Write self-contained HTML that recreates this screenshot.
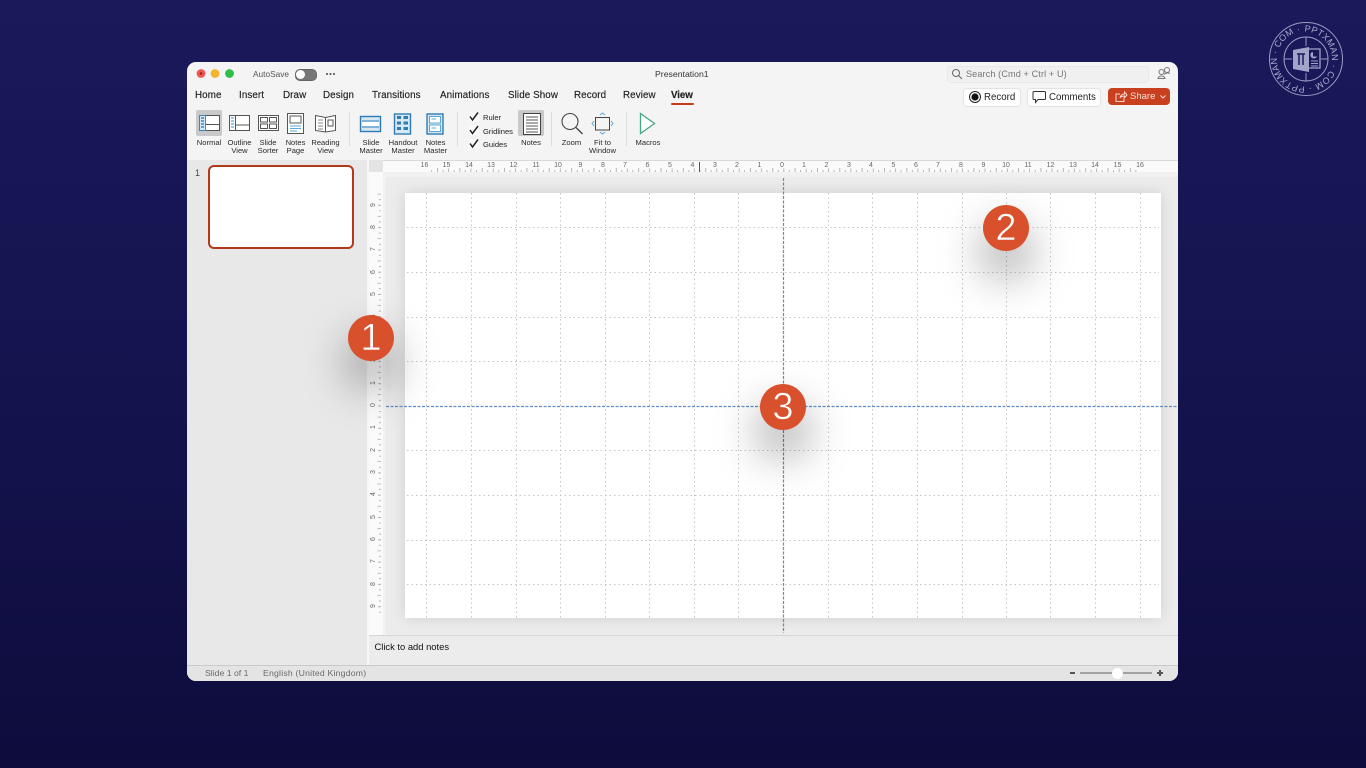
<!DOCTYPE html>
<html><head><meta charset="utf-8"><style>
html,body{margin:0;padding:0;width:1366px;height:768px;overflow:hidden}
body{background:linear-gradient(180deg,#1a195a 0%,#151450 45%,#0e0c3c 100%);font-family:"Liberation Sans",sans-serif;position:relative}
#w{position:absolute;left:187px;top:62px;width:991px;height:619px;border-radius:9px;overflow:hidden;background:#f4f4f4;filter:blur(.3px)}
.a{position:absolute}
.t{position:absolute;white-space:nowrap;color:#222}
.tab{top:28px;font-size:9.8px;line-height:12px;color:#222;letter-spacing:.1px;-webkit-text-stroke:.15px #222}
.l{position:absolute;font-size:7.6px;line-height:8.8px;text-align:center;color:#2a2a2a;white-space:nowrap;transform:translateX(-50%)}
.b{position:absolute;width:46px;height:46px;border-radius:50%;background:#d9512c;color:#fff;font-size:38px;line-height:46px;text-align:center;box-shadow:0 24px 44px 2px rgba(0,0,0,.36);font-family:"Liberation Sans",sans-serif;-webkit-text-stroke:.6px #d9512c}
.btn{position:absolute;top:26px;height:17px;background:#fff;border:1px solid #e3e3e3;border-radius:4px;box-sizing:content-box;font-size:9.2px;line-height:17px;color:#222}
</style></head><body>

<svg class="a" style="left:1266px;top:19px" width="80" height="80" viewBox="0 0 80 80">
<defs><path id="cp" d="M38.500 12.500a27.500 27.500 0 1 1 -.01 0"/></defs>
<g fill="none" stroke="#9a9bc4" stroke-width="1">
<circle cx="40" cy="40" r="36.500"/><circle cx="40" cy="40" r="22"/>
<path d="M40 18V27M40 54V62M18 40H26M55 40H62"/>
</g>
<path d="M27 31L43 28V53L27 50Z" fill="#a3a4c9"/>
<path d="M31 35H39M33 35V46M37 35V46" stroke="#1a195c" stroke-width="1.500" fill="none"/>
<path d="M43 30H54V49H43" fill="none" stroke="#a3a4c9" stroke-width="1.300"/>
<path d="M46 33a3.500 3.500 0 1 0 5 4.500h-4v-4z" fill="#a3a4c9"/>
<path d="M45 42H52M45 44.500H52M45 47H52" stroke="#a3a4c9" stroke-width=".9"/>
<text font-family="Liberation Sans" font-size="9" fill="#a9aacd" letter-spacing=".2" word-spacing=".5"><textPath href="#cp" startOffset="0">PPTXMAN · COM · PPTXMAN · COM ·</textPath></text>
</svg>

<div id="w">
<!-- title bar -->
<svg class="a" style="left:0;top:0" width="60" height="24"><circle cx="14" cy="11.500" r="4.400" fill="#ee5a52"/><circle cx="14" cy="11.500" r="1.400" fill="#a8231d"/><circle cx="28" cy="11.500" r="4.400" fill="#f5b32e"/><circle cx="42.500" cy="11.500" r="4.400" fill="#2fbf49"/></svg>
<div class="t" style="left:66px;top:6px;font-size:8.300px;line-height:12px;color:#555">AutoSave</div>
<div class="a" style="left:108px;top:7px;width:20px;height:10px;border-radius:5px;background:#777;border:.5px solid #666"></div>
<div class="a" style="left:108.500px;top:7.500px;width:9.500px;height:9.500px;border-radius:50%;background:#fff"></div>
<div class="a" style="left:138.500px;top:10.500px;width:2px;height:2px;background:#444;border-radius:50%;box-shadow:3.500px 0 #444,7px 0 #444"></div>
<div class="t" style="left:468px;top:6px;font-size:8.700px;line-height:12px;color:#333">Presentation1</div>
<div class="a" style="left:760px;top:4px;width:200px;height:15px;background:#f0f0f0;border:.5px solid #e8e8e8;border-radius:4px"></div>
<svg class="a" style="left:764px;top:6px" width="12" height="12" fill="none" stroke="#666" stroke-width="1"><circle cx="5" cy="5" r="3.500"/><path d="M7.500 7.500L11 11"/></svg>
<div class="t" style="left:779px;top:6px;font-size:9.100px;line-height:12px;color:#777;letter-spacing:.12px">Search (Cmd + Ctrl + U)</div>
<svg class="a" style="left:969px;top:3px" width="16" height="16" fill="none" stroke="#777" stroke-width="1"><circle cx="11" cy="5" r="2.500"/><circle cx="5.500" cy="7" r="2.500"/><path d="M2 13.500a3.500 2.500 0 0 1 7 0zM8 9.500a4 3 0 0 1 6-1"/></svg>

<!-- tabs -->
<div class="t tab" style="left:8px">Home</div>
<div class="t tab" style="left:52px">Insert</div>
<div class="t tab" style="left:96px">Draw</div>
<div class="t tab" style="left:136px">Design</div>
<div class="t tab" style="left:185px">Transitions</div>
<div class="t tab" style="left:253px">Animations</div>
<div class="t tab" style="left:321px">Slide Show</div>
<div class="t tab" style="left:387px">Record</div>
<div class="t tab" style="left:436px">Review</div>
<div class="t tab" style="left:484px;font-weight:bold;letter-spacing:-.1px">View</div>
<div class="a" style="left:484px;top:41px;width:23px;height:2px;background:#c43e1c;border-radius:1px"></div>

<!-- right buttons -->
<div class="btn" style="left:776px;width:56px"></div>
<svg class="a" style="left:781px;top:28px" width="14" height="14"><circle cx="7" cy="7" r="5.500" fill="none" stroke="#222"/><circle cx="7" cy="7" r="3.600" fill="#111"/></svg>
<div class="t" style="left:797px;top:27px;font-size:9.700px;line-height:17px">Record</div>
<div class="btn" style="left:840px;width:72px"></div>
<svg class="a" style="left:845px;top:28px" width="15" height="15" fill="none" stroke="#333"><path d="M2 1.500H12.500Q13.500 1.500 13.500 2.500V8.500Q13.500 9.500 12.500 9.500H6L3.500 12.500V9.500H2Q1 9.500 1 8.500V2.500Q1 1.500 2 1.500Z"/></svg>
<div class="t" style="left:862px;top:27px;font-size:9.700px;line-height:17px">Comments</div>
<div class="a" style="left:921px;top:26px;width:62px;height:17px;background:#c8401f;border-radius:4px"></div>
<svg class="a" style="left:927px;top:28px" width="14" height="14" fill="none" stroke="#f6d6cc" stroke-width="1"><path d="M10 7.500V11.500H2V4H6M6 8C6.500 5 8.500 4 10.500 4V2L13 5L10.500 7.500V6C8.500 6 7 6.500 6 8Z"/></svg>
<div class="t" style="left:943px;top:26px;font-size:9.500px;line-height:18px;color:#fbe4dc">Share</div>
<svg class="a" style="left:972px;top:31px" width="8" height="8" fill="none" stroke="#fbe4dc"><path d="M1.500 2.500L4 5L6.500 2.500"/></svg>

<!-- ribbon active -->
<div class="a" style="left:9px;top:48px;width:26px;height:26px;background:#c9c9c9;border-radius:2px"></div>
<div class="a" style="left:331px;top:48px;width:26px;height:26px;background:#c9c9c9;border-radius:2px"></div>

<!-- ribbon icons -->
<svg class="a" style="left:0;top:46px" width="700" height="52" fill="none" stroke="#555" stroke-width="1">
<!-- normal -->
<rect x="12.500" y="7.500" width="20" height="15" fill="#fff"/><rect x="12.500" y="7.500" width="6" height="15" fill="#d6e8f5" stroke="#3a87bf"/><path d="M19 16.500H32"/><path d="M14 10H17M14 13H17M14 16H17M14 19H17" stroke="#3a87bf" stroke-width="1.500"/>
<!-- outline -->
<rect x="42.500" y="7.500" width="20" height="15" fill="#fff"/><path d="M48.500 7.500V22.500M49 17H62"/><path d="M44 10H47M44 13H47M44 16H47M44 19H47" stroke="#5aa7d6" stroke-width="1.300"/>
<!-- sorter -->
<rect x="71.500" y="7.500" width="20" height="15" fill="#fff"/><rect x="73.500" y="9.500" width="7" height="4.500"/><rect x="82.500" y="9.500" width="7" height="4.500"/><rect x="73.500" y="16" width="7" height="4.500"/><rect x="82.500" y="16" width="7" height="4.500"/>
<!-- notes page -->
<rect x="100.500" y="5.500" width="16" height="20" fill="#fff"/><rect x="103" y="8" width="11" height="7"/><path d="M103 18H114M103 20.500H114M103 23H110" stroke="#5aa7d6"/>
<!-- reading -->
<path d="M128.500 7.500L138.500 9.500L148.500 7.500V22.500L138.500 24L128.500 22.500ZM138.500 9.500V24" fill="#fff"/><path d="M131 12H136M131 15H136M131 18H136M131 21H136" stroke="#888"/><rect x="141" y="12" width="5" height="6"/>
<!-- divider -->
<path d="M162.500 4V38M270.500 4V38M364.500 4V38M439.500 4V38" stroke="#dcdcdc"/>
<!-- slide master -->
<rect x="173.500" y="8.500" width="20" height="15" fill="#d6e8f5" stroke="#2f7cb5" stroke-width="1.400"/><path d="M175 13H192M175 19H192" stroke="#2f7cb5"/><rect x="175" y="14" width="17" height="4" fill="#fff" stroke="none"/>
<!-- handout -->
<rect x="207.500" y="6" width="16" height="20" fill="#d6e8f5" stroke="#2f7cb5" stroke-width="1.400"/><path d="M210 9.500H214M216.500 9.500H221M210 15H214M216.500 15H221M210 20.500H214M216.500 20.500H221" stroke="#2f7cb5" stroke-width="3"/>
<!-- notes master -->
<rect x="240" y="6" width="16" height="20" fill="#d6e8f5" stroke="#2f7cb5" stroke-width="1.400"/><rect x="242.500" y="8.500" width="11" height="6.500" fill="#fff" stroke="#5aa7d6"/><rect x="242.500" y="17" width="11" height="6.500" fill="#fff" stroke="#5aa7d6"/><path d="M244.500 11H249M244.500 20H249" stroke="#5aa7d6"/>
<!-- check -->
<rect x="282" y="4" width="10" height="10" rx="2" fill="#fafafa" stroke="none"/><rect x="282" y="17.500" width="10" height="10" rx="2" fill="#fafafa" stroke="none"/><rect x="282" y="31" width="10" height="10" rx="2" fill="#fafafa" stroke="none"/>
<path d="M283 8.500L285.500 12L291 4.500M283 22L285.500 25.500L291 18M283 35.500L285.500 39L291 31.500" stroke="#222" stroke-width="1.500"/>
<!-- notes -->
<rect x="336.500" y="5.500" width="17" height="21" fill="#fff" stroke="#444"/><path d="M339 9H351M339 12H351M339 15H351M339 18H351M339 21H351M339 24H351" stroke="#555"/>
<!-- zoom -->
<circle cx="383" cy="13.500" r="8" stroke="#444" stroke-width="1.100"/><path d="M389 19.500L395.500 26" stroke="#444" stroke-width="1.300"/>
<!-- fit -->
<rect x="408.500" y="9.500" width="14" height="12.500" stroke="#444"/><path d="M413 7L415.500 5L418 7M413 24L415.500 26L418 24M407 13L405 15.500L407 18M424 13L426 15.500L424 18" stroke="#5aa7d6" stroke-width="1"/>
<!-- macros -->
<path d="M453.500 5.500L467.500 15.500L453.500 25.500Z" stroke="#46a883" stroke-width="1.300" fill="#fff"/>
</svg>

<!-- ribbon labels -->
<div class="l" style="left:22px;top:76.500px">Normal</div>
<div class="l" style="left:52.500px;top:76.500px">Outline<br>View</div>
<div class="l" style="left:81px;top:76.500px">Slide<br>Sorter</div>
<div class="l" style="left:108.500px;top:76.500px">Notes<br>Page</div>
<div class="l" style="left:138.500px;top:76.500px">Reading<br>View</div>
<div class="l" style="left:184px;top:76.500px">Slide<br>Master</div>
<div class="l" style="left:216px;top:76.500px">Handout<br>Master</div>
<div class="l" style="left:248.500px;top:76.500px">Notes<br>Master</div>
<div class="t" style="left:296px;top:51px;font-size:7.600px;line-height:10px">Ruler</div>
<div class="t" style="left:296px;top:64.500px;font-size:7.600px;line-height:10px">Gridlines</div>
<div class="t" style="left:296px;top:78px;font-size:7.600px;line-height:10px">Guides</div>
<div class="l" style="left:344px;top:76.500px">Notes</div>
<div class="l" style="left:384.500px;top:76.500px">Zoom</div>
<div class="l" style="left:415.500px;top:76.500px">Fit to<br>Window</div>
<div class="l" style="left:461px;top:76.500px">Macros</div>

<!-- panes -->
<div class="a" style="left:0;top:98px;width:180px;height:505px;background:#e8e8e8"></div>
<div class="a" style="left:180px;top:98px;width:2px;height:505px;background:#f7f7f7"></div>
<div class="t" style="left:8px;top:105px;font-size:9px;line-height:12px;color:#444">1</div>
<div class="a" style="left:21px;top:103px;width:146px;height:84px;box-sizing:border-box;background:#fff;border:2px solid #b23a1c;border-radius:6px"></div>

<!-- canvas -->
<div class="a" style="left:182px;top:98px;width:809px;height:475px;background:#ececec"></div>
<div class="a" style="left:182px;top:98px;width:809px;height:12px;background:#fafafa;border-top:1px solid #d9d9d9;box-sizing:border-box"></div>
<div class="a" style="left:182px;top:98px;width:14px;height:12px;background:#e4e4e4"></div>
<div class="a" style="left:182px;top:110px;width:14px;height:463px;background:#fafafa"></div>
<div class="a" style="left:196px;top:110px;width:795px;height:5px;background:#f1f1f1"></div>
<div class="a" style="left:196px;top:110px;width:3px;height:463px;background:#f1f1f1"></div>

<!-- rulers -->
<svg class="a" style="left:196px;top:98px" width="795" height="14">
<defs><pattern id="hr" x="9.300" y="0" width="22.350" height="14" patternUnits="userSpaceOnUse"><path d="M.5 8V12M6 10V12M11.600 8.500V12M17.100 10V12" stroke="#999" stroke-width=".7"/></pattern></defs>
<rect x="44" y="0" width="710" height="14" fill="url(#hr)"/>
<path d="M316.500 2V12" stroke="#555"/>
<g font-family="Liberation Sans" font-size="7" fill="#666" text-anchor="middle">
<text x="41.500" y="7">16</text><text x="63.500" y="7">15</text><text x="86" y="7">14</text><text x="108" y="7">13</text><text x="130.500" y="7">12</text><text x="153" y="7">11</text><text x="175" y="7">10</text><text x="197.500" y="7">9</text><text x="220" y="7">8</text><text x="242" y="7">7</text><text x="264.500" y="7">6</text><text x="287" y="7">5</text><text x="309.500" y="7">4</text><text x="332" y="7">3</text><text x="354" y="7">2</text><text x="376.500" y="7">1</text><text x="399" y="7">0</text><text x="421" y="7">1</text><text x="443.500" y="7">2</text><text x="466" y="7">3</text><text x="488" y="7">4</text><text x="510.500" y="7">5</text><text x="533" y="7">6</text><text x="555" y="7">7</text><text x="578" y="7">8</text><text x="600.500" y="7">9</text><text x="623" y="7">10</text><text x="645" y="7">11</text><text x="667.500" y="7">12</text><text x="690" y="7">13</text><text x="712" y="7">14</text><text x="734.500" y="7">15</text><text x="757" y="7">16</text>
</g></svg>
<svg class="a" style="left:182px;top:114px" width="14" height="459">
<defs><pattern id="vr" x="0" y="6.500" width="14" height="22.300" patternUnits="userSpaceOnUse"><path d="M9 .5H12M10 6H12M8.500 11.600H12M10 17.100H12" stroke="#999" stroke-width=".7"/></pattern></defs>
<rect x="0" y="17" width="14" height="423" fill="url(#vr)"/>
<g font-family="Liberation Sans" font-size="7" fill="#666" text-anchor="middle">
<text transform="translate(6,29) rotate(-90)">9</text><text transform="translate(6,51) rotate(-90)">8</text><text transform="translate(6,73) rotate(-90)">7</text><text transform="translate(6,96) rotate(-90)">6</text><text transform="translate(6,118) rotate(-90)">5</text><text transform="translate(6,140) rotate(-90)">4</text><text transform="translate(6,162) rotate(-90)">3</text><text transform="translate(6,184) rotate(-90)">2</text><text transform="translate(6,207) rotate(-90)">1</text><text transform="translate(6,229) rotate(-90)">0</text><text transform="translate(6,251) rotate(-90)">1</text><text transform="translate(6,274) rotate(-90)">2</text><text transform="translate(6,296) rotate(-90)">3</text><text transform="translate(6,318) rotate(-90)">4</text><text transform="translate(6,341) rotate(-90)">5</text><text transform="translate(6,363) rotate(-90)">6</text><text transform="translate(6,385) rotate(-90)">7</text><text transform="translate(6,408) rotate(-90)">8</text><text transform="translate(6,430) rotate(-90)">9</text>
</g></svg>

<!-- slide -->
<div class="a" style="left:218px;top:131px;width:756px;height:425px;background:#fff;box-shadow:0 0 14px rgba(0,0,0,.12)"></div>
<svg class="a" style="left:199px;top:116px" width="792" height="457" fill="none">
<g stroke="#c6c6c6" stroke-width="1" stroke-dasharray="1.500 3">
<path d="M40.500 15V440M85.500 15V440M130.500 15V440M174.500 15V440M219.500 15V440M263.500 15V440M308.500 15V440M352.500 15V440M442.500 15V440M486.500 15V440M531.500 15V440M576.500 15V440M620.500 15V440M664.500 15V440M709.500 15V440M754.500 15V440"/>
<path d="M21 49.500H773M21 94.500H773M21 139.500H773M21 183.500H773M21 272.500H773M21 317.500H773M21 362.500H773M21 406.500H773"/>
</g>
<g stroke="#5f8cc4" stroke-width="1.200" stroke-dasharray="3 1.500">
<path d="M397.500 0V455M0 228.500H792"/>
</g>
</svg>

<!-- notes -->
<div class="a" style="left:182px;top:573px;width:809px;height:30px;background:#ececec;border-top:1px solid #d6d6d6;box-sizing:border-box"></div>
<div class="t" style="left:187.500px;top:578px;font-size:9.400px;line-height:13px;color:#111">Click to add notes</div>

<!-- status -->
<div class="a" style="left:0;top:603px;width:991px;height:16px;background:#e4e4e4;border-top:1px solid #c9c9c9;box-sizing:border-box"></div>
<div class="t" style="left:18px;top:605px;font-size:8.700px;line-height:12px;color:#6a6a6a">Slide 1 of 1</div>
<div class="t" style="left:76px;top:605px;font-size:8.700px;line-height:12px;color:#6a6a6a;letter-spacing:.2px">English (United Kingdom)</div>
<div class="a" style="left:883px;top:610px;width:5px;height:1.500px;background:#555"></div>
<div class="a" style="left:893px;top:610px;width:72px;height:2px;background:#a2a2a2"></div>
<div class="a" style="left:925px;top:606px;width:10.500px;height:10.500px;border-radius:50%;background:#fff"></div>
<div class="a" style="left:970px;top:610px;width:6px;height:1.500px;background:#555"></div>
<div class="a" style="left:972.300px;top:608px;width:1.500px;height:6px;background:#555"></div>
</div>

<!-- badges -->
<div class="b" style="left:348px;top:315px">1</div>
<div class="b" style="left:983px;top:205px">2</div>
<div class="b" style="left:760px;top:384px">3</div>
</body></html>
